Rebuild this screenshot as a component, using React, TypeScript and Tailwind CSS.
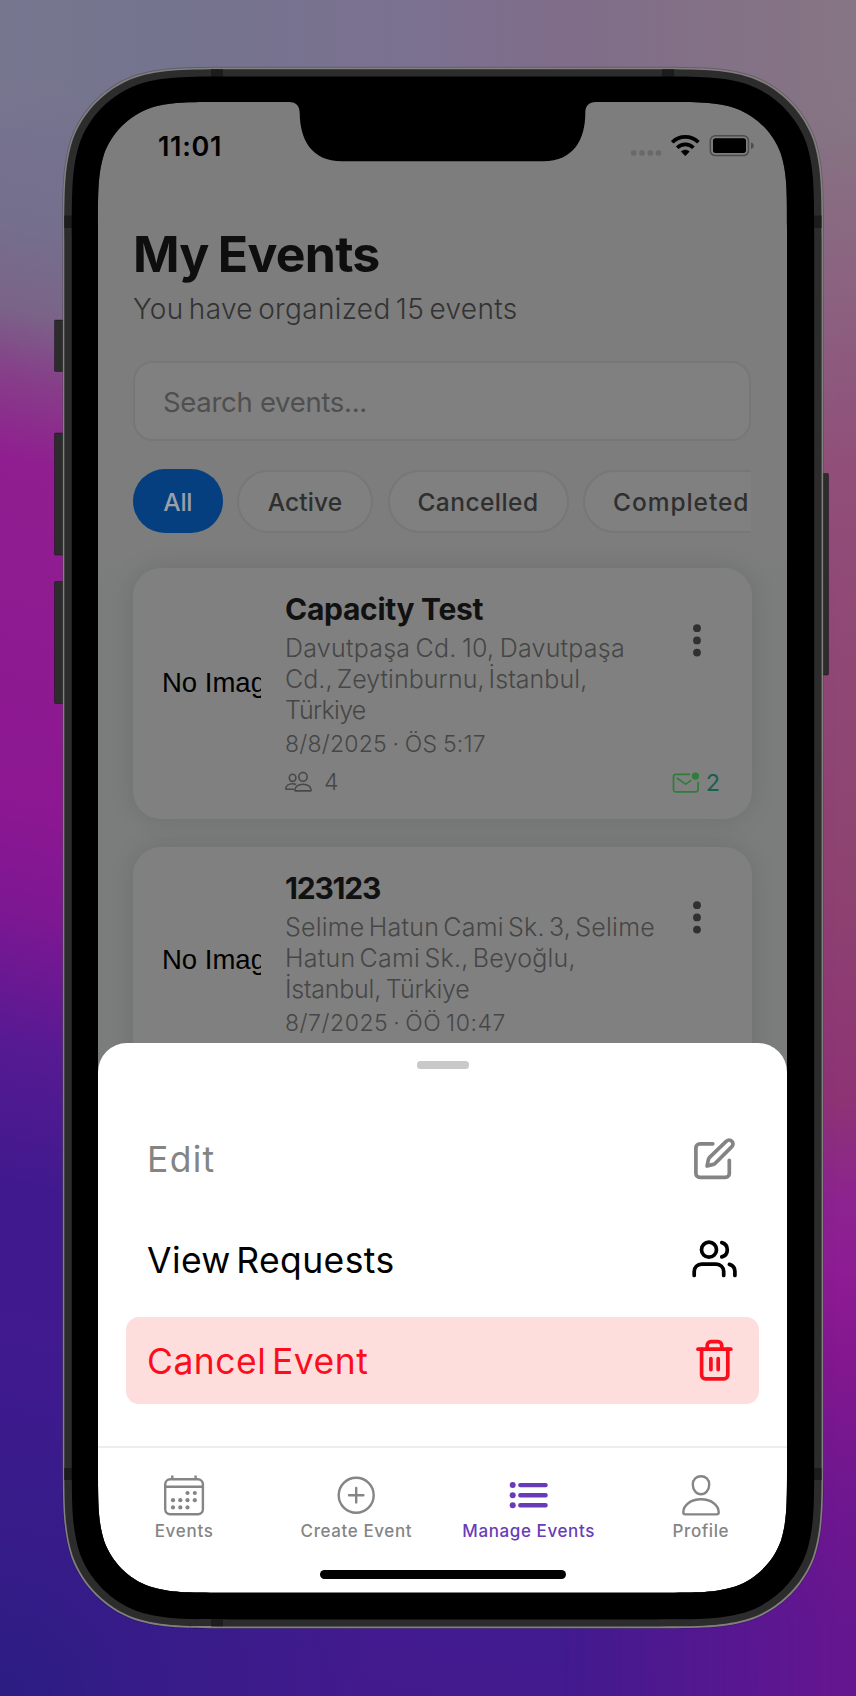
import type { ReactNode } from "react";

/* Rounded rectangle with continuous ("squircle") corners. */
function squircle(x0: number, y0: number, x1: number, y1: number, r: number) {
  const a = 1.528665 * r;
  const b = 1.08849296 * r;
  const c = 0.86840694 * r;
  const d = 0.63149379 * r;
  const e = 0.07491139 * r;
  const f = 0.37282383 * r;
  const g = 0.16905956 * r;
  return [
    `M${x0 + a} ${y0}H${x1 - a}`,
    `C${x1 - b} ${y0} ${x1 - c} ${y0} ${x1 - d} ${y0 + e}`,
    `C${x1 - f} ${y0 + g} ${x1 - g} ${y0 + f} ${x1 - e} ${y0 + d}`,
    `C${x1} ${y0 + c} ${x1} ${y0 + b} ${x1} ${y0 + a}V${y1 - a}`,
    `C${x1} ${y1 - b} ${x1} ${y1 - c} ${x1 - e} ${y1 - d}`,
    `C${x1 - g} ${y1 - f} ${x1 - f} ${y1 - g} ${x1 - d} ${y1 - e}`,
    `C${x1 - c} ${y1} ${x1 - b} ${y1} ${x1 - a} ${y1}H${x0 + a}`,
    `C${x0 + b} ${y1} ${x0 + c} ${y1} ${x0 + d} ${y1 - e}`,
    `C${x0 + f} ${y1 - g} ${x0 + g} ${y1 - f} ${x0 + e} ${y1 - d}`,
    `C${x0} ${y1 - c} ${x0} ${y1 - b} ${x0} ${y1 - a}V${y0 + a}`,
    `C${x0} ${y0 + b} ${x0} ${y0 + c} ${x0 + e} ${y0 + d}`,
    `C${x0 + g} ${y0 + f} ${x0 + f} ${y0 + g} ${x0 + d} ${y0 + e}`,
    `C${x0 + c} ${y0} ${x0 + b} ${y0} ${x0 + a} ${y0}Z`,
  ].join("");
}

const SCREEN = squircle(98, 102, 787, 1592.7, 82);

function Backdrop() {
  return (
    <>
      <div className="absolute inset-0 bg-[linear-gradient(193deg,#77768f_9%,#756f8e_22%,#7a6488_26.5%,#863f89_30%,#901e90_34.5%,#8c1792_53%,#7d1792_58.5%,#561a92_65.5%,#40198e_73%,#421a90_89%,#431a8e_95%)]" />
      <div className="absolute inset-0 bg-[radial-gradient(circle_at_0%_100%,#2a1d82_0,#2a1d8299_110px,transparent_380px)]" />
      <div className="absolute inset-0 bg-[linear-gradient(180deg,#867583_0%,#867483_7%,#8c6080_18%,#904f79_27%,#904a76_35%,#8d4370_52%,#8d3375_65%,#8c2290_71%,#8e1c93_75%,#84178f_80%,#6f178f_88%,#641690_96%)] [mask-image:linear-gradient(90deg,transparent_66%,black_98%)]" />
      <div className="absolute inset-x-0 top-0 h-[160px] bg-[linear-gradient(90deg,#77768f_0%,#74748e_20%,#7b7190_48%,#806d89_68%,#867583_100%)] [mask-image:linear-gradient(180deg,black_50%,transparent)]" />
    </>
  );
}

function SideButtons() {
  return (
    <svg className="absolute inset-0 size-full" viewBox="0 0 856 1696" fill="#2c2c2c" stroke="#00000055" strokeWidth="1">
      <rect x="54.5" y="320" width="12" height="51.5" rx="1" />
      <rect x="54.5" y="433" width="12" height="122" rx="1" />
      <rect x="54.5" y="581.5" width="12" height="122" rx="1" />
      <rect x="818" y="473.5" width="10.5" height="201.5" rx="1" />
    </svg>
  );
}

function Bezel() {
  return (
    <svg className="pointer-events-none absolute inset-0 size-full" viewBox="0 0 856 1696" fillRule="evenodd">
      <path d={squircle(62, 66.8, 824, 1629, 114) + SCREEN} fill="#00000033" />
      <path d={squircle(62.8, 67.8, 823.2, 1628.2, 113) + SCREEN} fill="#80807d" />
      <path d={squircle(64.3, 69.3, 821.6, 1626.4, 112) + SCREEN} fill="#2c2c2c" />
      <g fill="#1c1c1c">
        <rect x="211" y="69.3" width="12" height="8" />
        <rect x="662" y="69.3" width="12" height="8" />
        <rect x="211" y="1619" width="12" height="7.4" />
        <rect x="64.3" y="215.5" width="8" height="12.5" />
        <rect x="813.5" y="215.5" width="8" height="12.5" />
        <rect x="64.3" y="1468" width="8" height="12" />
        <rect x="813.5" y="1468" width="8" height="12" />
      </g>
      <path d={squircle(71.8, 76.6, 814.2, 1619.4, 105) + SCREEN} fill="#000" />
      <path
        d="M286 101H599V102H596C588.5 102 585.3 106 585.3 113C585.3 139 574 161.3 543 161.3H342C311 161.3 300 139 299.7 113C299.5 106 296.5 102 289 102H286Z"
        fill="#000"
      />
    </svg>
  );
}

function StatusBar() {
  return (
    <div className="flex h-[60px] items-end justify-between pr-[32px] pl-[60px]">
      <span className="text-[27px] leading-[31px] font-semibold tracking-[0.7px] text-black">11:01</span>
      <svg width="126" height="32" viewBox="630 130 126 32" fill="none">
        <g fill="#696969">
          <rect x="632" y="150.2" width="5.4" height="5.6" rx="1.8" />
          <rect x="640.3" y="150.2" width="5.4" height="5.6" rx="1.8" />
          <rect x="648.6" y="150.2" width="5.4" height="5.6" rx="1.8" />
          <rect x="656.8" y="150.2" width="5.4" height="5.6" rx="1.8" />
        </g>
        <g stroke="#000" strokeWidth="3.7">
          <path d="M673.2 142.2a18.6 18.6 0 0 1 26.2 0" />
          <path d="M678.2 147.8a11.4 11.4 0 0 1 16.2 0" />
        </g>
        <path d="M686.3 155.8l-4-4.2a5.8 5.8 0 0 1 8 0z" fill="#000" stroke="#000" strokeWidth=".6" strokeLinejoin="round" />
        <rect x="711.3" y="135.8" width="38.2" height="19.8" rx="5" stroke="#4d4d4d" strokeWidth="1.5" />
        <rect x="714" y="138.3" width="33" height="14.6" rx="2.6" fill="#000" />
        <path d="M752 142.4c1.8.6 2.8 1.8 2.8 3.3s-1 2.7-2.8 3.3z" fill="#4d4d4d" />
      </svg>
    </div>
  );
}

function Chips() {
  return (
    <div className="mt-[28px] mr-[36px] ml-[35px] flex gap-[14.5px] overflow-hidden text-[24.5px] leading-[66px] font-medium text-[#2f2f2f]">
      <span className="h-[64px] w-[89.5px] shrink-0 rounded-full bg-[#053f80] text-center tracking-[-0.3px] text-[#9aa0a8]">All</span>
      <span className="my-[0.5px] h-[63px] w-[136px] shrink-0 rounded-full border-2 border-[#777777] bg-[#808080] text-center leading-[61px] tracking-[0.15px]">Active</span>
      <span className="my-[0.5px] h-[63px] w-[181px] shrink-0 rounded-full border-2 border-[#777777] bg-[#808080] text-center leading-[61px] tracking-[0.45px]">Cancelled</span>
      <span className="my-[0.5px] h-[63px] w-[198px] shrink-0 rounded-full border-2 border-[#777777] bg-[#808080] pl-[28px] leading-[61px] tracking-[0.95px]">Completed</span>
    </div>
  );
}

function PeopleIcon() {
  return (
    <svg width="28" height="22" viewBox="0 0 28 22" fill="none" stroke="#484848" strokeWidth="1.6" strokeLinejoin="round">
      <ellipse cx="18" cy="5.8" rx="4.2" ry="4.4" />
      <ellipse cx="7.6" cy="6.8" rx="3.3" ry="3.6" />
      <path d="M9.800 19.300c0-3.600 3.600-6 8.200-6s8.200 2.400 8.200 6c0 .4-.2.6-.6.6H10.400c-.4 0-.6-.2-.6-.6z" />
      <path d="M9 18.200H1.300c-.3 0-.5-.2-.5-.5 0-3 2.800-5 6.800-5 1.400 0 2.500.3 3.400.8" />
    </svg>
  );
}

function MailBadgeIcon() {
  return (
    <svg width="28" height="24" viewBox="0 0 28 24" fill="none" stroke="#2e7d38" strokeWidth="1.7" strokeLinecap="round" strokeLinejoin="round">
      <path d="M17.500 3.300H3.800a2.300 2.300 0 0 0-2.300 2.300v13a2.300 2.300 0 0 0 2.300 2.300h20a2.300 2.300 0 0 0 2.300-2.300v-7" />
      <path d="M5.300 7.300l8.300 5.800 5-3.500" />
      <circle cx="23.400" cy="5.100" r="3.600" fill="#2e7d38" stroke="none" />
    </svg>
  );
}

type CardProps = {
  title: ReactNode;
  address: ReactNode;
  date: ReactNode;
  imageClass: string;
  dotsClass: string;
  going?: number;
  requests?: number;
};

function EventCard({ title, address, date, imageClass, dotsClass, going, requests }: CardProps) {
  return (
    <article className="mx-[35px] flex h-[250.500px] rounded-[28px] bg-[#808080] pr-[32px] pl-[29px] shadow-[0_0_26px_rgba(0,0,0,0.11)]">
      <div className={`w-[99px] shrink-0 overflow-hidden font-['Liberation_Sans',Arial,sans-serif] text-[27.500px] leading-[31px] whitespace-nowrap text-black ${imageClass}`}>
        No Image
      </div>
      <div className="ml-[24px] flex-1 pt-[22px] whitespace-nowrap">
        <h2 className="text-[30px] leading-[38px] font-bold text-[#111]">{title}</h2>
        <p className="mt-[5px] text-[25px] leading-[31px] font-[360] text-[#464646]">{address}</p>
        <p className="mt-[3px] text-[23px] leading-[30px] font-[360] text-[#464646]">{date}</p>
        {going !== undefined && (
          <div className="mt-[8px] flex items-center gap-[11px] text-[23px] leading-[30px] font-light text-[#464646]">
            <PeopleIcon />
            {going}
          </div>
        )}
      </div>
      <div className={`flex flex-col items-end justify-between pb-[21px] ${dotsClass}`}>
        <svg className="mr-[19px]" width="8" height="33" viewBox="0 0 8 33" fill="#303030">
          <circle cx="4" cy="4.200" r="3.900" />
          <circle cx="4" cy="16.400" r="3.900" />
          <circle cx="4" cy="28.600" r="3.900" />
        </svg>
        {requests !== undefined && (
          <div className="flex items-center gap-[6px] text-[23.500px] leading-[30px] text-[#19604f]">
            <MailBadgeIcon />
            {requests}
          </div>
        )}
      </div>
    </article>
  );
}

function EditIcon() {
  return (
    <svg width="46" height="46" viewBox="693 1134 46 46" fill="none" stroke="#848484" strokeWidth="3.700" strokeLinecap="round" strokeLinejoin="round">
      <path d="M713.800 1142.800H700.800a3.900 3.900 0 0 0-3.900 3.900V1172.500a3.900 3.900 0 0 0 3.900 3.900H726.400a3.900 3.900 0 0 0 3.900-3.900V1159.300" />
      <path d="M727.400 1140.200a3.850 3.850 0 0 1 5.450 5.450L716.300 1162.200a5 5 0 0 1-2 1.200L708.100 1165l1.300-6.500a5 5 0 0 1 1.200-2.200z" />
    </svg>
  );
}

function RequestsIcon() {
  return (
    <svg width="48" height="46" viewBox="691 1236 48 46" fill="none" stroke="#000" strokeWidth="3.700" strokeLinecap="round">
      <circle cx="710" cy="1249.700" r="7.500" />
      <path d="M695.200 1275.500V1271.500a7.400 7.400 0 0 1 7.400-7.400H717.300a7.400 7.400 0 0 1 7.400 7.400V1275.500" />
      <path d="M722.800 1242.600a7.400 7.400 0 0 1 0 14.300" />
      <path d="M730.400 1264.400a7.400 7.400 0 0 1 5.500 7.100V1275.500" />
    </svg>
  );
}

function TrashIcon() {
  return (
    <svg width="42" height="46" viewBox="695 1337 42 46" fill="none" stroke="#fc0d1b" strokeWidth="3.700" strokeLinecap="round">
      <path d="M699 1349.200H731.800" />
      <path d="M702.600 1349.200V1375a3.800 3.800 0 0 0 3.800 3.800H725a3.800 3.800 0 0 0 3.800-3.800V1349.200" />
      <path d="M708.200 1349V1345.400a3.700 3.700 0 0 1 3.700-3.700H719a3.700 3.700 0 0 1 3.700 3.700V1349" />
      <path d="M711.900 1358.600V1369.600M719.200 1358.600V1369.600" />
    </svg>
  );
}

function ActionSheet() {
  return (
    <section className="relative -mt-[30px] h-[403px] rounded-t-[29px] bg-white px-[28px] pt-[18px]">
      <div className="mx-auto h-[7.500px] w-[52px] rounded-[3.500px] bg-[#c9c9c9]" />
      <div className="mt-[46px] flex flex-col gap-[14.500px] text-[35.500px] leading-[44px] font-[370]">
        <button className="flex h-[86.700px] items-center justify-between rounded-[13px] pr-[21px] pl-[21px] tracking-[1.300px] text-[#848484]">
          <span className="pt-[4px]">Edit</span>
          <EditIcon />
        </button>
        <button className="flex h-[86.700px] items-center justify-between rounded-[13px] pr-[21px] pl-[21px] tracking-[0.400px] [word-spacing:-5px] text-black">
          <span className="pt-[4px]">View Requests</span>
          <RequestsIcon />
        </button>
        <button className="flex h-[86.700px] items-center justify-between rounded-[13px] bg-[#fddedd] pr-[23px] pl-[21px] tracking-[0.500px] [word-spacing:-5px] text-[#fc0d1b]">
          <span className="pt-[4px]">Cancel Event</span>
          <TrashIcon />
        </button>
      </div>
    </section>
  );
}

const CALENDAR_DOTS = [
  [187.500, 1493], [194.800, 1493],
  [173, 1500.200], [180.300, 1500.200], [187.500, 1500.200], [194.800, 1500.200],
  [173, 1507.400], [180.300, 1507.400], [187.500, 1507.400],
];

function TabBar() {
  return (
    <nav className="relative h-[147px] border-t-2 border-[#ededed] bg-white pt-[25px] text-[17px] leading-[24px] font-medium text-[#858585]">
      <div className="grid grid-cols-4">
        <div className="flex flex-col items-center tracking-[0.700px]">
          <svg width="44" height="46" viewBox="162 1473 44 46" fill="none" stroke="#858585" strokeWidth="2.400">
            <rect x="165.200" y="1479.300" width="37.700" height="35" rx="5" />
            <path d="M165.200 1486.800H202.900M172.300 1475.500V1479M195.600 1475.500V1479" />
            {CALENDAR_DOTS.map(([x, y]) => (
              <circle key={`${x}-${y}`} cx={x} cy={y} r="2.100" fill="#858585" stroke="none" />
            ))}
          </svg>
          Events
        </div>
        <div className="flex flex-col items-center tracking-[0.600px]">
          <svg width="44" height="46" viewBox="334.500 1473 44 46" fill="none" stroke="#858585" strokeWidth="2.400" strokeLinecap="round">
            <circle cx="356.700" cy="1495.200" r="17.500" />
            <path d="M349.500 1495.200H363.900M356.700 1488V1502.400" />
          </svg>
          Create Event
        </div>
        <div className="flex flex-col items-center tracking-[0.600px] whitespace-nowrap text-[#683cb9]">
          <svg width="44" height="46" viewBox="507 1473 44 46" fill="#683cb9" stroke="#683cb9" strokeWidth="4.400" strokeLinecap="round">
            <path d="M520.300 1485.100H545.600M520.300 1495.200H545.600M520.300 1505.300H545.600" />
            <g stroke="none">
              <circle cx="512.700" cy="1485.100" r="3" />
              <circle cx="512.700" cy="1495.200" r="3" />
              <circle cx="512.700" cy="1505.300" r="3" />
            </g>
          </svg>
          Manage Events
        </div>
        <div className="flex flex-col items-center tracking-[0.600px]">
          <svg width="44" height="46" viewBox="679 1473 44 46" fill="none" stroke="#858585" strokeWidth="2.400" strokeLinejoin="round">
            <path d="M701 1476.200C705.500 1476.200 709.200 1479.200 709.200 1484.500C709.200 1490 705.500 1494.200 701 1494.200S692.800 1490 692.800 1484.500C692.800 1479.200 696.500 1476.200 701 1476.200Z" />
            <path d="M701 1499.300C711.500 1499.300 718.700 1505.500 718.700 1512.300C718.700 1513.800 718 1514.400 716.700 1514.400H685.300C684 1514.400 683.300 1513.800 683.300 1512.300C683.300 1505.500 690.500 1499.300 701 1499.300Z" />
          </svg>
          Profile
        </div>
      </div>
      <div className="mx-auto mt-[27px] h-[9px] w-[246px] rounded-full bg-black" />
    </nav>
  );
}

export default function App() {
  return (
    <div className="relative h-[1696px] w-[856px] overflow-hidden pt-[102px] pl-[98px] font-[Inter,sans-serif]">
      <Backdrop />
      <SideButtons />
      <main className="relative w-[689px]">
        <div className="h-[971px] overflow-hidden bg-[linear-gradient(180deg,#7d7d7d_0%,#7d7d7d_44%,#7b7d7c_50%)]">
          <StatusBar />
          <h1 className="mt-[62px] ml-[35px] text-[50px] leading-[60px] font-bold tracking-[-0.750px] [word-spacing:-2px] text-[#0e0e0e]">
            My Events
          </h1>
          <p className="mt-[7px] ml-[35px] text-[28px] leading-9 font-[360] tracking-[0.350px] [word-spacing:-3px] text-[#333]">
            You have organized 15 events
          </p>
          <div className="mr-[36px] ml-[35px] mt-[34px] flex h-[80px] items-center rounded-[20px] border-2 border-[#777777] bg-[#808080] pl-[28px] text-[27.500px] tracking-[-0.300px] text-[#4f4f4f]">
            <span className="pt-[3px]">Search events...</span>
          </div>
          <Chips />
          <div className="mt-[35px] flex flex-col gap-[28.500px]">
            <EventCard
              title={<span className="tracking-[-0.300px]">Capacity Test</span>}
              address={
                <>
                  <span className="block tracking-[0.250px] [word-spacing:-2px]">Davutpaşa Cd. 10, Davutpaşa</span>
                  <span className="block tracking-[0.050px] [word-spacing:-3px]">Cd., Zeytinburnu, İstanbul,</span>
                  <span className="block tracking-[-0.700px]">Türkiye</span>
                </>
              }
              date={<span className="tracking-[0.200px] [word-spacing:-1px]">8/8/2025 · ÖS 5:17</span>}
              imageClass="pt-[98.500px]"
              dotsClass="pt-[56px]"
              going={4}
              requests={2}
            />
            <EventCard
              title={<span className="tracking-[-1.200px]">123123</span>}
              address={
                <>
                  <span className="block tracking-[0.220px] [word-spacing:-3px]">Selime Hatun Cami Sk. 3, Selime</span>
                  <span className="block tracking-[0.240px] [word-spacing:-3px]">Hatun Cami Sk., Beyoğlu,</span>
                  <span className="block tracking-[-0.250px] [word-spacing:-2px]">İstanbul, Türkiye</span>
                </>
              }
              date={<span className="tracking-[0.520px] [word-spacing:-2px]">8/7/2025 · ÖÖ 10:47</span>}
              imageClass="pt-[96.500px]"
              dotsClass="pt-[54px]"
            />
          </div>
        </div>
        <ActionSheet />
        <TabBar />
      </main>
      <Bezel />
    </div>
  );
}
